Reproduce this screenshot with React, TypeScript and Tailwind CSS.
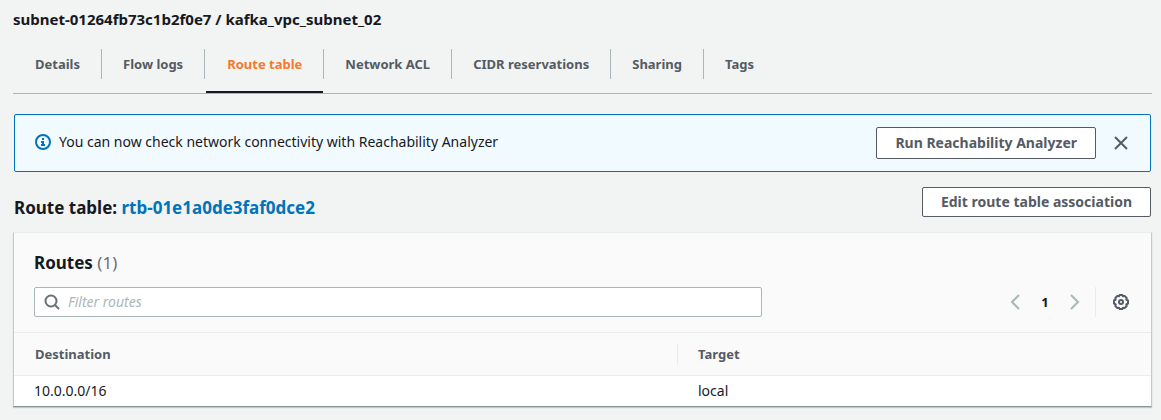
import { useState } from "react";

const tabs = ["Details", "Flow logs", "Route table", "Network ACL", "CIDR reservations", "Sharing", "Tags"];
const routes = [{ destination: "10.0.0.0/16", target: "local" }];

function InfoIcon() {
  return (
    <svg viewBox="0 0 16 16" className="size-4 shrink-0 text-[#0073bb]" fill="none" stroke="currentColor" strokeWidth="2" aria-hidden="true">
      <circle cx="8" cy="8" r="7" />
      <path d="M8 11V8H6M10 11H6" />
      <path d="M8 6V4" />
    </svg>
  );
}

function CloseIcon() {
  return (
    <svg viewBox="0 0 16 16" className="size-4" fill="none" stroke="currentColor" strokeWidth="2" aria-hidden="true">
      <path d="M2 2l12 12M14 2L2 14" />
    </svg>
  );
}

function SearchIcon() {
  return (
    <svg viewBox="0 0 16 16" className="size-4 shrink-0 text-[#687078]" fill="none" stroke="currentColor" strokeWidth="2" aria-hidden="true">
      <circle cx="7" cy="7" r="5.500" />
      <path d="M15 15l-4-4" />
    </svg>
  );
}

function AngleIcon({ flip = false }: { flip?: boolean }) {
  return (
    <svg viewBox="0 0 16 16" className="size-4" fill="none" stroke="currentColor" strokeWidth="2" aria-hidden="true">
      <path d={flip ? "M4 1l7 7-7 7" : "M12 1L5 8l7 7"} />
    </svg>
  );
}

function GearIcon() {
  return (
    <svg viewBox="0 0 16 16" className="size-4" fill="none" stroke="currentColor" strokeWidth="2" strokeLinejoin="round" aria-hidden="true">
      <path d="M6.700 1h2.600l.7 1.300 1.600-.4 2.100 2.100-.4 1.600 1.700.9v3l-1.700.9.4 1.600-2.100 2.100-1.600-.4L9.300 15H6.700L6 13.700l-1.600.4L2.300 12l.4-1.600L1 9.500v-3l1.700-.9L2.300 4l2.100-2.100 1.600.4z" />
      <circle cx="8" cy="8" r="2" />
    </svg>
  );
}

export default function App() {
  const [active, setActive] = useState("Route table");
  const [filter, setFilter] = useState("");
  const visible = routes.filter((r) => `${r.destination} ${r.target}`.includes(filter));

  return (
    <main className="min-h-screen bg-[#f2f3f3] pr-[9px] pl-[13px] pt-[9px] pb-3 font-['Noto_Sans',sans-serif] text-[13px] leading-5 text-[#16191f]">
      <h1 className="text-[15px] font-bold leading-5">subnet-01264fb73c1b2f0e7 / kafka_vpc_subnet_02</h1>

      <nav role="tablist" className="mt-5 flex h-[45px] border-b border-[#aab7b8] pl-px">
        {tabs.map((tab) => (
          <button
            key={tab}
            role="tab"
            aria-selected={tab === active}
            onClick={() => setActive(tab)}
            className="group flex h-[45px] items-start"
          >
            <span
              className={
                tab === active
                  ? "ml-px flex h-11 items-start border-b-2 border-[#16191f] px-[21px] pt-[5px] font-bold text-[#f27a2d]"
                  : "flex h-11 items-start px-[21px] pt-[5px] font-bold text-[#545b64]"
              }
            >
              {tab}
            </span>
            <span className="h-[30px] w-px bg-[#aab7b8] group-last:hidden" />
          </button>
        ))}
      </nav>

      <section className="mt-5 mr-px ml-px flex min-h-[58px] items-center rounded-xs border border-[#0073bb] bg-[#f1faff] pr-[21px] pl-5">
        <div className="flex flex-1 items-center gap-2 pb-0.5">
          <InfoIcon />
          <p className="text-sm">You can now check network connectivity with Reachability Analyzer</p>
        </div>
        <button className="h-8 rounded-xs border border-[#545b64] bg-white px-[18px] text-sm font-bold text-[#545b64]">Run Reachability Analyzer</button>
        <button aria-label="Dismiss" className="ml-[17px] text-[#545b64]">
          <CloseIcon />
        </button>
      </section>

      <div className="mt-[15px] mr-px ml-px flex items-start justify-between">
        <h2 className="pt-[9px] text-[17px] font-bold leading-6">
          Route table:{" "}
          <a href="#route-table" className="text-[#0073bb]">rtb-01e1a0de3faf0dce2</a>
        </h2>
        <button className="h-[30px] rounded-xs border border-[#545b64] bg-white px-[18px] text-sm font-bold text-[#545b64]">Edit route table association</button>
      </div>

      <section className="mt-3 border border-t-[#eaeded] border-r-[#c3cbcb] border-b-[#879596] border-l-[#c3cbcb] bg-[#fafafa] shadow-[0_1px_1px_0_rgba(0,28,36,0.2)]">
        <div className="pr-[21px] pl-5 pt-[18px] pb-[15px]">
          <h3 className="text-[17px] font-bold leading-6">
            Routes <span className="font-normal text-[#687078]">(1)</span>
          </h3>
          <div className="mt-3 flex items-center">
            <label className="flex h-[30px] w-[728px] min-w-0 items-center gap-2 rounded-xs border border-[#aab7b8] bg-white px-[9px]">
              <SearchIcon />
              <input
                aria-label="Filter routes"
                placeholder="Filter routes"
                value={filter}
                onChange={(e) => setFilter(e.target.value)}
                className="min-w-0 flex-1 text-sm outline-none placeholder:text-[#aab7b8] placeholder:italic"
              />
            </label>
            <div className="ml-auto flex items-center text-[#aab7b8]">
              <button aria-label="Previous page">
                <AngleIcon />
              </button>
              <button aria-current="page" className="w-11 text-center font-bold text-[#16191f]">1</button>
              <button aria-label="Next page">
                <AngleIcon flip />
              </button>
              <span className="ml-3 h-[30px] w-px bg-[#eaeded]" />
              <button aria-label="Preferences" className="ml-[17px] mr-px text-[#545b64]">
                <GearIcon />
              </button>
            </div>
          </div>
        </div>
        <table className="w-full table-fixed border-collapse border-t border-[#eaeded] text-left">
          <thead>
            <tr className="h-[43px] border-b border-[#eaeded] text-[#545b64]">
              <th className="w-[58.400%] p-0 font-bold">
                <div className="flex h-[22px] items-center border-r border-[#eaeded] pl-[21px]">Destination</div>
              </th>
              <th className="pl-5 font-bold">Target</th>
            </tr>
          </thead>
          <tbody className="bg-white text-sm">
            {visible.map((r) => (
              <tr key={r.destination} className="h-[30px]">
                <td className="pl-5">{r.destination}</td>
                <td className="pl-5">{r.target}</td>
              </tr>
            ))}
          </tbody>
        </table>
      </section>
    </main>
  );
}
